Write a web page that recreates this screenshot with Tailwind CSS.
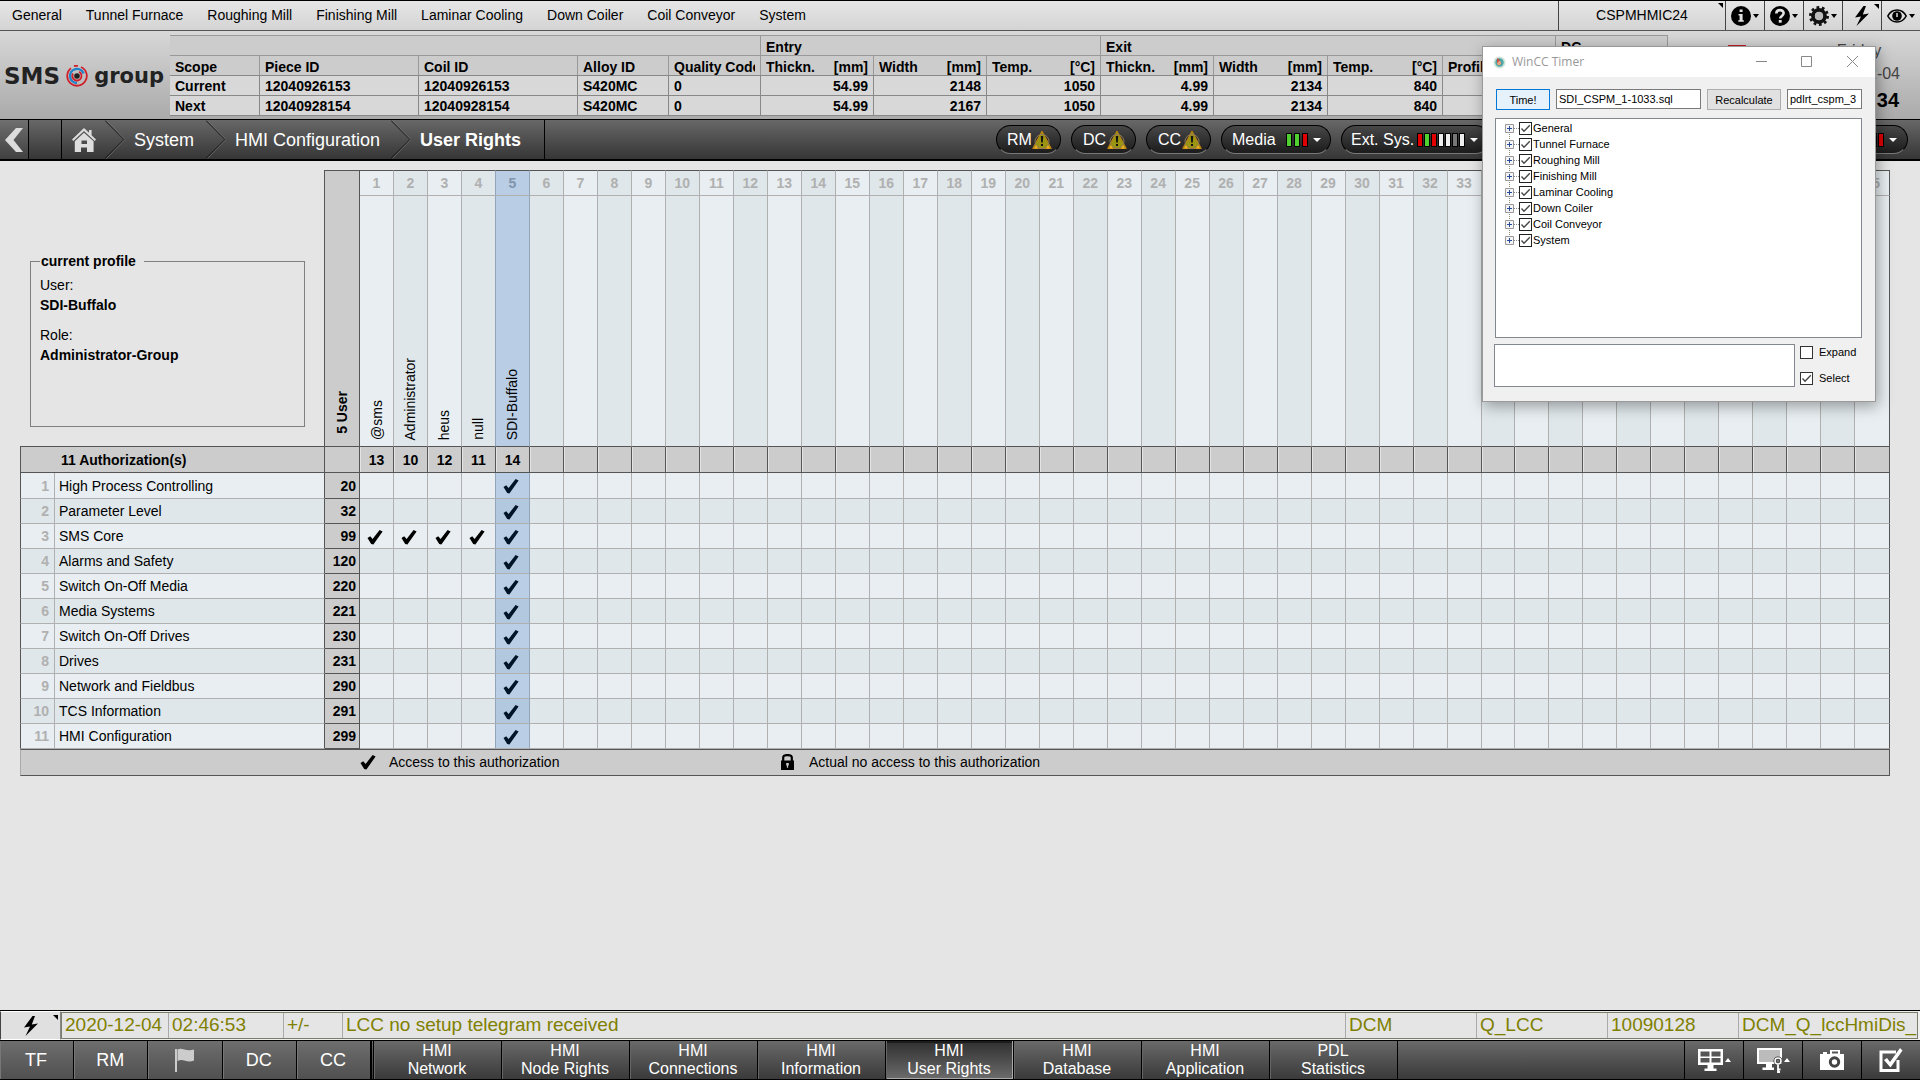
<!DOCTYPE html>
<html lang="en">
<head>
<meta charset="utf-8">
<title>HMI User Rights</title>
<script src="https://cdn.jsdelivr.net/npm/@tailwindcss/browser@4"></script>
</head>
<body class="relative flex h-screen flex-col overflow-hidden bg-[#e5e5e5] font-['Liberation_Sans',Arial,sans-serif] text-[14px] leading-[18px] text-black">

<svg class="hidden" aria-hidden="true">
  <symbol id="check" viewBox="0 0 16 16"><path d="M0.5 9 L3.2 7.2 L5.6 10 L12.6 1 L15.6 2.6 L6.4 15.4 L4.2 15 Z" fill="currentColor"/></symbol>
  <symbol id="bolt" viewBox="0 0 16 20"><path d="M9.5 0 L1 11.5 L7 10.6 L2.5 20 L15 7.6 L8.8 8.4 L12 0 Z" fill="currentColor"/></symbol>
  <symbol id="warn" viewBox="0 0 20 20"><path d="M10 1 L19.3 18.5 H0.7 Z" fill="#9a9412" stroke="#c08010" stroke-width="1"/><circle cx="10" cy="11.5" r="7" fill="none" stroke="#8b7a5a" stroke-width="1"/><path d="M2 18.4 H6 L4 15Z M18 18.4 H14 L16 15Z" fill="#f0b020"/><path d="M8.8 6 h2.4 l-.4 6.5 h-1.6z M9 14 h2 v2 h-2z" fill="#111"/></symbol>
  <symbol id="tick" viewBox="0 0 13 13"><path d="M2.5 6.5 L5 9.2 L10.8 3.2" fill="none" stroke="#444" stroke-width="1.3"/></symbol>
  <symbol id="chev" viewBox="0 0 20 38"><path d="M0 0 L19 19 L0 38" fill="none" stroke="#111" stroke-width="1"/><path d="M1.5 0 L20 19 L1.5 38" fill="none" stroke="#7a7a7a" stroke-width=".7"/></symbol>
</svg>

<!-- menu bar -->
<nav class="flex h-[31px] shrink-0 items-stretch justify-between border-t border-b border-t-black border-b-[#555] bg-linear-to-b from-[#e6e6e6] to-[#d4d4d4]">
  <div class="flex items-center gap-6 pb-[2px] pl-3">
    <a href="#">General</a><a href="#">Tunnel Furnace</a><a href="#">Roughing Mill</a><a href="#">Finishing Mill</a><a href="#">Laminar Cooling</a><a href="#">Down Coiler</a><a href="#">Coil Conveyor</a><a href="#">System</a>
  </div>
  <div class="flex">
    <button class="relative w-[167px] border-l border-[#444] pb-[2px]">CSPMHMIC24
      <svg class="absolute top-[2px] right-[2px] size-[5px]" viewBox="0 0 5 5"><path d="M0 0H5V5Z"/></svg></button>
    <button aria-label="Information" class="flex w-[39px] items-center justify-center gap-[2px] border-l border-[#444]">
      <svg class="size-5" viewBox="0 0 20 20"><circle cx="10" cy="10" r="10"/><path d="M8.6 3.5h3v2.6h-3zM7.5 8h4.1v6.2h1.2v1.6H7.3v-1.6h1.3V9.6H7.5z" fill="#e2e2e2"/></svg>
      <svg class="h-1 w-[6px]" viewBox="0 0 6 4"><path d="M0 0H6L3 4Z"/></svg></button>
    <button aria-label="Help" class="flex w-[39px] items-center justify-center gap-[2px] border-l border-[#444]">
      <svg class="size-5" viewBox="0 0 20 20"><circle cx="10" cy="10" r="10"/><path d="M6.3 7.5C6.3 3 13.6 3 13.6 7.3C13.6 9.8 10.2 10 10.2 12.5" fill="none" stroke="#e2e2e2" stroke-width="2.6"/><path d="M8.8 14h2.9v2.7H8.8z" fill="#e2e2e2"/></svg>
      <svg class="h-1 w-[6px]" viewBox="0 0 6 4"><path d="M0 0H6L3 4Z"/></svg></button>
    <button aria-label="Settings" class="flex w-[39px] items-center justify-center gap-[2px] border-l border-[#444]">
      <svg class="size-5" viewBox="0 0 20 20"><circle cx="10" cy="10" r="6" fill="none" stroke="#111" stroke-width="3.8"/><circle cx="10" cy="10" r="8.6" fill="none" stroke="#111" stroke-width="2.8" stroke-dasharray="2.7 2.7"/><circle cx="10" cy="10" r="4.2" fill="#bbb"/></svg>
      <svg class="h-1 w-[6px]" viewBox="0 0 6 4"><path d="M0 0H6L3 4Z"/></svg></button>
    <button aria-label="Alarms" class="relative flex w-[39px] items-center justify-center border-l border-[#444]">
      <svg class="h-5 w-4"><use href="#bolt"/></svg>
      <svg class="absolute top-[3px] right-[2px] size-[5px]" viewBox="0 0 5 5"><path d="M0 0H5V5Z"/></svg></button>
    <button aria-label="View" class="flex w-[39px] items-center justify-center gap-[2px] border-l border-[#444]">
      <svg class="h-[14px] w-5" viewBox="0 0 20 14"><path d="M0.8 7C5 -1 15 -1 19.2 7C15 15 5 15 0.8 7Z" fill="none" stroke="#000" stroke-width="1.6"/><circle cx="10" cy="7" r="4.8"/><path d="M10 4v4" stroke="#ddd" stroke-width="1.5"/></svg>
      <svg class="h-1 w-[6px]" viewBox="0 0 6 4"><path d="M0 0H6L3 4Z"/></svg></button>
  </div>
</nav>

<!-- material header -->
<header class="flex h-[88px] shrink-0 items-start bg-linear-to-b from-[#d8d8d8] to-[#aaaaaa] pt-1">
  <div class="flex w-[170px] shrink-0 items-center justify-between pt-[29px] pr-[6px] pl-[4px] font-['DejaVu_Sans',sans-serif] text-[21px] leading-6 font-bold text-[#222]">
    <span class="text-[23px]">SMS</span>
    <svg class="size-[22px]" viewBox="0 0 22 22" fill="none"><circle cx="11" cy="11" r="2.8" fill="#222"/><path d="M15 2A9.8 9.8 0 1 1 5 3.200" stroke="#d0202c" stroke-width="1.800"/><path d="M8 1A10.200 10.200 0 0 1 12 .9" stroke="#d0202c" stroke-width="1.800"/><path d="M11 18A7 7 0 1 1 17.600 8.500" stroke="#2080c8" stroke-width="2.400"/><path d="M7 8.500A4.600 4.600 0 1 0 13 6.800" stroke="#d0202c" stroke-width="1.800"/></svg>
    <span>group</span>
  </div>
  <table class="w-[1498px] shrink-0 table-fixed border-separate border-spacing-0 border-b border-[#888] text-left leading-[16px] font-bold whitespace-nowrap [&_td]:h-5 [&_td]:border-t [&_td]:border-l [&_td]:border-[#888] [&_td]:bg-[#d8d8d8] [&_td]:px-[5px] [&_td]:py-0 [&_th]:h-5 [&_th]:border-t [&_th]:border-l [&_th]:border-[#999] [&_th]:bg-[#cccccc] [&_th]:px-[5px] [&_th]:pt-[3px] [&_th]:pb-0">
    <colgroup><col class="w-[89px]"><col class="w-[159px]"><col class="w-[159px]"><col class="w-[91px]"><col class="w-[92px]"><col class="w-[113px]"><col class="w-[113px]"><col class="w-[114px]"><col class="w-[113px]"><col class="w-[114px]"><col class="w-[115px]"><col class="w-[113px]"><col class="w-[113px]"></colgroup>
    <thead id="matHead"></thead>
    <tbody id="matBody"></tbody>
  </table>
  <div class="flex flex-1 items-start justify-end gap-[72px] pt-[3px] pr-[20px] text-[16px] text-[#444]">
    <span class="mt-[7px] h-[14px] w-[18px] bg-[#c01c28]"></span>
    <div class="flex flex-col items-center">
      <span class="leading-[26px]">Friday</span>
      <span class="leading-5">2020-12-04</span>
      <span class="text-[20px] leading-8 font-bold text-black">02:46:34</span>
    </div>
  </div>
</header>

<!-- navigation bar -->
<div class="flex h-[42px] shrink-0 items-stretch border-t border-b-2 border-black bg-linear-to-b from-[#686868] to-[#363636] text-[18px] text-white">
  <button aria-label="Back" class="flex w-[29px] items-center justify-center border-r border-black bg-white/5">
    <svg class="h-[24px] w-[18px]" viewBox="0 0 18 24"><path d="M11 0H18L8.5 12L18 24H11L0 12Z" fill="#dcdcdc"/></svg></button>
  <div class="w-[33px] border-r border-black"></div>
  <a href="#" aria-label="Home" class="flex items-center pl-[10px]">
    <svg class="size-6" viewBox="0 0 24 24" fill="#ddd"><path d="M12 0L0 11.5L1.3 13L12 3L22.7 13L24 11.5L19.6 7.3V2H17V4.8Z"/><path d="M12 4.8L2.8 13.2V24H9V19.5H15V24H21.6V13.2ZM9.5 12.5H15V16H9.5Z" fill-rule="evenodd"/></svg></a>
  <svg class="ml-[9px] h-full w-5 shrink-0"><use href="#chev"/></svg>
  <a href="#" class="flex w-[81px] items-center pl-[9px]">System</a>
  <svg class="h-full w-5 shrink-0"><use href="#chev"/></svg>
  <a href="#" class="flex w-[165px] items-center pl-[9px] whitespace-nowrap">HMI Configuration</a>
  <svg class="h-full w-5 shrink-0"><use href="#chev"/></svg>
  <a href="#" class="flex w-[134px] items-center border-r border-black pl-[9px] font-bold">User Rights</a>
  <div class="flex flex-1 items-center gap-[10px] pl-[451px] text-[16px]">
    <button class="flex h-[29px] w-[65px] shrink-0 items-center rounded-full border border-black border-b-[#777] bg-linear-to-b from-[#484848] to-[#1c1c1c] pl-[10px]">RM<svg class="size-5"><use href="#warn"/></svg></button>
    <button class="flex h-[29px] w-[65px] shrink-0 items-center rounded-full border border-black border-b-[#777] bg-linear-to-b from-[#484848] to-[#1c1c1c] pl-[11px]">DC<svg class="ml-px size-5"><use href="#warn"/></svg></button>
    <button class="flex h-[29px] w-[65px] shrink-0 items-center rounded-full border border-black border-b-[#777] bg-linear-to-b from-[#484848] to-[#1c1c1c] pl-[11px]">CC<svg class="ml-px size-5"><use href="#warn"/></svg></button>
    <button class="flex h-[29px] w-[110px] shrink-0 items-center rounded-full border border-black border-b-[#777] bg-linear-to-b from-[#484848] to-[#1c1c1c] pl-[10px]">Media
      <span class="ml-[10px] flex gap-[2px]"><i class="h-[14px] w-[6px] border border-black bg-[#4fd030]"></i><i class="h-[14px] w-[6px] border border-black bg-[#4fd030]"></i><i class="h-[14px] w-[6px] border border-black bg-[#e00000]"></i></span>
      <svg class="ml-[5px] h-1 w-2" viewBox="0 0 8 4" fill="#fff"><path d="M0 0H8L4 4Z"/></svg></button>
    <button class="flex h-[29px] w-[149px] shrink-0 items-center rounded-full border border-black border-b-[#777] bg-linear-to-b from-[#484848] to-[#1c1c1c] pl-[9px] whitespace-nowrap">Ext. Sys.
      <span class="ml-[3px] flex gap-px"><i class="h-[14px] w-[6px] border border-black bg-[#e00000]"></i><i class="h-[14px] w-[6px] border border-black bg-[#4fd030]"></i><i class="h-[14px] w-[6px] border border-black bg-[#e00000]"></i><i class="h-[14px] w-[6px] border border-black bg-[#eee]"></i><i class="h-[14px] w-[6px] border border-black bg-[#eee]"></i><i class="h-[14px] w-[6px] border border-black bg-[#777]"></i><i class="h-[14px] w-[6px] border border-black bg-[#eee]"></i></span>
      <svg class="ml-[5px] h-1 w-2" viewBox="0 0 8 4" fill="#fff"><path d="M0 0H8L4 4Z"/></svg></button>
    <button aria-label="Status" class="mr-[12px] ml-auto flex h-[29px] w-[109px] shrink-0 items-center justify-end rounded-full border border-black border-b-[#777] bg-linear-to-b from-[#484848] to-[#1c1c1c] pr-[10px]">
      <span class="flex gap-px"><i class="h-[14px] w-[6px] border border-black bg-[#e00000]"></i><i class="h-[14px] w-[6px] border border-black bg-[#e00000]"></i></span>
      <svg class="ml-[5px] h-1 w-2" viewBox="0 0 8 4" fill="#fff"><path d="M0 0H8L4 4Z"/></svg></button>
  </div>
</div>

<!-- rights matrix -->
<main class="flex-1 pt-[9px] pr-[30px] pl-5">
  <table class="w-full table-fixed border-separate border-spacing-0">
    <colgroup id="cols"></colgroup>
    <thead id="head"></thead>
    <tbody id="rows"></tbody>
    <tfoot>
      <tr><td colspan="48" class="h-[27px] border-t border-r border-b border-l border-[#555] border-l-[#aaa] bg-[#cccccc] p-0 pb-[2px]">
        <div class="flex items-center pl-[339px]">
          <span class="flex w-[421px] items-center gap-[13px]"><svg class="size-4"><use href="#check"/></svg>Access to this authorization</span>
          <span class="flex items-center gap-[15px]"><svg class="h-4 w-[13px]" viewBox="0 0 13 16"><path d="M2.2 7V3.5C2.2 .2 10.8 .2 10.8 3.5V7" fill="none" stroke="#000" stroke-width="2.2"/><path d="M0 6.5H13V16H0Z"/><path d="M5.2 9h2.6v2.2l-.7.6v2H5.9v-2l-.7-.6z" fill="#ccc"/></svg>Actual no access to this authorization</span>
        </div></td></tr>
    </tfoot>
  </table>
</main>

<!-- alarm line -->
<div class="flex h-[31px] shrink-0 border-t border-b border-black bg-[#eee] text-[19px] text-[#808000]">
  <button aria-label="Acknowledge alarm" class="relative flex w-[61px] items-center justify-center border border-l-[#444] border-y-white border-r-[#888] bg-[#e0e0e0] text-black">
    <svg class="h-5 w-4"><use href="#bolt"/></svg>
    <svg class="absolute top-[3px] right-[2px] size-[5px]" viewBox="0 0 5 5"><path d="M0 0H5V5Z"/></svg></button>
  <div class="my-px mr-[2px] flex flex-1 overflow-hidden border border-[#7c7c68] bg-[#e5e5e5] leading-[23px] whitespace-nowrap">
    <span class="w-[107px] border-r border-[#aaa] pl-[3px]">2020-12-04</span>
    <span class="w-[115px] border-r border-[#aaa] pl-[3px]">02:46:53</span>
    <span class="w-[59px] border-r border-[#aaa] pl-[3px]">+/-</span>
    <span class="flex-1 border-r border-[#aaa] pl-[3px]">LCC no setup telegram received</span>
    <span class="w-[131px] border-r border-[#aaa] pl-[3px]">DCM</span>
    <span class="w-[131px] border-r border-[#aaa] pl-[3px]">Q_LCC</span>
    <span class="w-[131px] border-r border-[#aaa] pl-[3px]">10090128</span>
    <span class="w-[178px] overflow-hidden pl-[3px]">DCM_Q_lccHmiDis_</span>
  </div>
</div>

<!-- function bar -->
<div class="flex h-[39px] shrink-0 border-b border-black bg-linear-to-b from-[#6a6a6a] to-[#3a3a3a] text-[16px] leading-[18px] text-white">
  <div class="flex w-[374px] shrink-0 border-r-3 border-double border-black [&>button]:flex-1 [&>button]:border-r [&>button]:border-l [&>button]:border-r-black [&>button]:border-l-[#777] [&>button]:bg-linear-to-b [&>button]:from-[#6e6e6e] [&>button]:to-[#505050] [&>button]:pr-[2px] [&>button]:text-[18px]">
    <button>TF</button><button>RM</button>
    <button aria-label="Flag" class="flex items-center justify-center"><svg class="h-6 w-5" viewBox="0 0 20 24" fill="#ccc"><path d="M0 1h2v23H0z"/><path d="M2.5 1.5C7-1 11 4 19 1.5V12.5C12 15.5 8 10 2.5 13Z"/></svg></button>
    <button>DC</button><button>CC</button>
  </div>
  <div class="flex [&>button]:w-32 [&>button]:border-r [&>button]:border-l [&>button]:border-r-black [&>button]:border-l-[#666] [&>button]:pr-[2px]">
    <button>HMI<br>Network</button><button>HMI<br>Node Rights</button><button>HMI<br>Connections</button><button>HMI<br>Information</button>
    <button class="bg-linear-to-b from-[#303030] to-[#6c6c6c] shadow-[inset_-1px_-1px_0_#aaa,inset_0_2px_0_#1c1c1c]">HMI<br>User Rights</button>
    <button>HMI<br>Database</button><button>HMI<br>Application</button><button>PDL<br>Statistics</button>
  </div>
  <div class="ml-auto flex [&>button]:flex [&>button]:w-[59px] [&>button]:items-center [&>button]:justify-center [&>button]:border-l [&>button]:border-black">
    <button aria-label="Screens" class="gap-[2px]"><svg class="h-[22px] w-[25px]" viewBox="0 0 25 22"><path d="M0 0H25V16H0Z" fill="#fff"/><path d="M2.5 2.5h9v5h-9zM13.5 2.5h9v5h-9zM2.5 9h9v4.5h-9zM13.5 9h9v4.5h-9z" fill="#555"/><path d="M9.5 16h6v3.5h3V22h-12v-2.5h3z" fill="#fff"/></svg><svg class="h-1 w-[6px]" viewBox="0 0 6 4" fill="#fff"><path d="M0 4H6L3 0Z"/></svg></button>
    <button aria-label="Screen lock" class="gap-[2px]"><svg class="h-[25px] w-[25px]" viewBox="0 0 25 25"><path d="M0 0H25V16H0Z" fill="#fff"/><path d="M2 2H23V14H2Z" fill="#bbb"/><path d="M9 16h6v3.5h2V22H5.500v-2.500H9z" fill="#fff"/><circle cx="21" cy="13" r="3" fill="#777" stroke="#333" stroke-width="3"/><circle cx="21" cy="13" r="3" fill="none" stroke="#fff" stroke-width="1.500"/><path d="M21 16.500V25M21 21.500h2.500M21 24h2" stroke="#fff" stroke-width="1.800" fill="none"/></svg><svg class="h-1 w-[6px]" viewBox="0 0 6 4" fill="#fff"><path d="M0 4H6L3 0Z"/></svg></button>
    <button aria-label="Screenshot"><svg class="h-5 w-6" viewBox="0 0 24 20"><path d="M0 4H10V0H20V4H24V20H0Z" fill="#fff"/><path d="M12 1.500h6V3.500h-6z" fill="#555"/><path d="M3 2h4v2H3z" fill="#fff"/><circle cx="14.500" cy="12" r="4.200" fill="#fff" stroke="#444" stroke-width="3"/></svg></button>
    <button aria-label="Confirm"><svg class="h-6 w-6" viewBox="0 0 24 24"><path d="M17 4H2V22.500H19V12" fill="none" stroke="#fff" stroke-width="3"/><path d="M5 12L8 10L11 14L21 0L23.500 2.500L11.500 19.500Z" fill="#fff"/></svg></button>
  </div>
</div>

<!-- floating timer window -->
<section aria-label="WinCC Timer" class="absolute top-[46px] right-[44px] w-[394px] border border-[#999] bg-[#f0f0f0] pb-[14px] text-[11px] leading-[16px] shadow-[2px_4px_14px_rgba(0,0,0,0.35)]">
  <div class="flex h-[30px] items-center bg-white pl-[10px] text-[#999]">
    <svg class="size-[13px]" viewBox="0 0 13 13"><circle cx="6.500" cy="6.500" r="6" fill="#cfe5d8"/><circle cx="6.500" cy="6.500" r="4.200" fill="#4aa5a5"/><circle cx="6" cy="7" r="2.200" fill="#e8a080"/><path d="M4 2l3 2-3 3z" fill="#c84848"/></svg>
    <span class="ml-[6px] pb-px font-['Open_Sans',sans-serif] text-[12px]">WinCC Timer</span>
    <div class="ml-auto flex pr-[17px] pb-px">
      <button aria-label="Minimize" class="mr-[34px]"><svg class="size-[11px]" viewBox="0 0 11 11" stroke="#888" fill="none"><path d="M0 5.500H11"/></svg></button>
      <button aria-label="Maximize" class="mr-[35px]"><svg class="size-[11px]" viewBox="0 0 11 11" stroke="#888" fill="none"><path d="M.5.5H10.500V10.500H.5Z"/></svg></button>
      <button aria-label="Close"><svg class="size-[11px]" viewBox="0 0 11 11" stroke="#888" fill="none"><path d="M0 0L11 11M11 0L0 11"/></svg></button>
    </div>
  </div>
  <div class="flex items-start gap-[6px] pt-[12px] pr-[13px] pl-[13px]">
    <button class="h-[21px] w-[54px] border border-[#0078d7] bg-[#e5f1fb]">Time!</button>
    <input aria-label="SQL file" class="h-5 w-[145px] border border-[#7a7a7a] bg-white px-[2px]" value="SDI_CSPM_1-1033.sql">
    <button class="h-[21px] w-[74px] border border-[#adadad] bg-[#e1e1e1]">Recalculate</button>
    <input aria-label="Database" class="h-5 min-w-0 flex-1 border border-[#7a7a7a] bg-white px-[2px]" value="pdlrt_cspm_3">
  </div>
  <ul id="tree" class="mt-[8px] mr-[13px] ml-[12px] h-[220px] border border-[#828790] bg-white pt-px pl-[9px]"></ul>
  <div class="mt-[6px] flex pl-[11px]">
    <textarea aria-label="Log" class="h-[43px] w-[301px] resize-none border border-[#828790] bg-white"></textarea>
    <div class="flex flex-col gap-[10px] pl-[5px]">
      <label class="flex items-center gap-[6px]"><input type="checkbox" class="size-[13px] appearance-none border border-[#333] bg-white">Expand</label>
      <label class="flex items-center gap-[6px]"><span class="grid"><input type="checkbox" checked class="col-start-1 row-start-1 size-[13px] appearance-none border border-[#333] bg-white"><svg class="pointer-events-none col-start-1 row-start-1 size-[13px]"><use href="#tick"/></svg></span>Select</label>
    </div>
  </div>
</section>

<script>
// material header
document.getElementById('matHead').innerHTML =
  '<tr><th colspan="5" class="border-l-0!"></th><th colspan="3">Entry</th><th colspan="4">Exit</th><th class="border-r">DC</th></tr><tr>' +
  [['Scope',''],['Piece ID',''],['Coil ID',''],['Alloy ID',''],['Quality Code',''],['Thickn.','[mm]'],['Width','[mm]'],['Temp.','[°C]'],['Thickn.','[mm]'],['Width','[mm]'],['Temp.','[°C]'],['Profile',''],['','']]
    .map(([a, b], i) => `<th class="${i ? '' : 'border-l-0!'}"><div class="flex justify-between overflow-hidden"><span>${a}</span><span>${b}</span></div></th>`).join('') + '</tr>';
document.getElementById('matBody').innerHTML = [
  ['Current','12040926153','12040926153','S420MC','0','54.99','2148','1050','4.99','2134','840','',''],
  ['Next','12040928154','12040928154','S420MC','0','54.99','2167','1050','4.99','2134','840','','']
].map(r => '<tr>' + r.map((c, i) => `<td class="${i > 4 ? 'text-right' : i ? '' : 'border-l-0!'}">${c}</td>`).join('') + '</tr>').join('');

// rights matrix
const N = 45, users = ['@sms','Administrator','heus','null','SDI-Buffalo'], counts = [13,10,12,11,14];
const auths = [['High Process Controlling',20],['Parameter Level',32],['SMS Core',99],['Alarms and Safety',120],['Switch On-Off Media',220],['Media Systems',221],['Switch On-Off Drives',230],['Drives',231],['Network and Fieldbus',290],['TCS Information',291],['HMI Configuration',299]];
const idx = [...Array(N).keys()];
const edge = i => i === N - 1 ? 'border-r-[#555]' : i === 3 || i === 4 ? 'border-r-[#93a5bb]' : 'border-r-[#b0b0b0]';
const colBg = i => i === 4 ? 'bg-[#b9cde5]' : i % 2 ? 'bg-[#dfe7ea]' : 'bg-[#e8eef1]';
document.getElementById('cols').innerHTML = '<col class="w-[35px]"><col class="w-[270px]"><col class="w-[35px]">' + '<col>'.repeat(N);
document.getElementById('head').innerHTML =
  `<tr><td rowspan="2" colspan="2" class="border-r border-b border-[#555] pt-[82px] pr-[19px] pb-0 pl-[10px] align-top">
     <fieldset class="h-[175px] border border-[#808080] pl-[9px]">
       <legend class="pr-[8px] pl-px font-bold">current profile</legend>
       <p class="mt-[5px] leading-5">User:</p><p class="leading-5 font-bold">SDI-Buffalo</p>
       <p class="mt-[10px] leading-5">Role:</p><p class="leading-5 font-bold">Administrator-Group</p>
     </fieldset></td>
     <th rowspan="2" class="border-t border-r border-b border-[#555] bg-[#cccccc] p-0 pb-[12px] align-bottom"><span class="inline-block rotate-180 align-bottom [writing-mode:vertical-rl]">5 User</span></th>` +
  idx.map(i => `<th class="h-[26px] border-t border-r border-b border-t-[#555] border-b-[#b0b0b0] p-0 ${i === 4 ? 'text-[#8094ac]' : 'text-[#b0b0b0]'} ${edge(i)} ${colBg(i)}">${i + 1}</th>`).join('') + '</tr><tr>' +
  idx.map(i => `<th class="h-[251px] border-r border-b border-b-[#555] p-0 pb-[6px] align-bottom font-normal ${edge(i)} ${colBg(i)}"><span class="inline-block rotate-180 align-bottom [writing-mode:vertical-rl]">${users[i] || ''}</span></th>`).join('') + '</tr>' +
  `<tr><th colspan="2" class="h-[26px] border-r border-b border-l border-[#555] bg-[#cccccc] p-0 pl-[40px] text-left">11 Authorization(s)</th><th class="border-r border-b border-[#555] bg-[#cccccc]"></th>` +
  idx.map(i => `<th class="border-r border-b border-[#555] bg-[#cccccc] p-0 shadow-[inset_1px_0_0_#e4e4e4]">${counts[i] || ''}</th>`).join('') + '</tr>';
document.getElementById('rows').innerHTML = auths.map(([name, code], r) => {
  const bg = r % 2 ? 'bg-[#dfe7ea]' : 'bg-[#e8eef1]', sel = r % 2 ? 'bg-[#b1c8df]' : 'bg-[#bacee5]';
  return `<tr><td class="${r ? 'h-[25px]' : 'h-[26px]'} border-r border-b border-l border-[#b0b0b0] border-l-[#555] p-0 pr-[5px] text-right font-bold text-[#b0b0b0] ${bg}">${r + 1}</td>
    <th class="border-r border-b border-r-[#555] border-b-[#b0b0b0] p-0 pl-[4px] text-left font-normal ${bg}">${name}</th>
    <td class="border-r border-b border-[#555] bg-[#cccccc] p-0 pr-[3px] text-right font-bold">${code}</td>` +
    idx.map(i => `<td class="border-r border-b border-b-[#b0b0b0] p-0 ${edge(i)} ${i === 4 ? sel + ' text-[#001428]' : bg}">${i === 4 || (r === 2 && i < 4) ? '<svg class="mt-px ml-[7px] size-4"><use href="#check"/></svg>' : ''}</td>`).join('') + '</tr>';
}).join('');

// page tree of the timer window
const pages = ['General','Tunnel Furnace','Roughing Mill','Finishing Mill','Laminar Cooling','Down Coiler','Coil Conveyor','System'];
document.getElementById('tree').innerHTML = pages.map((p, i) =>
  `<li class="flex h-4 items-center"><svg class="h-4 w-[14px]" viewBox="0 0 14 16" fill="none"><path d="M4.500 ${i ? 0 : 8}V${i < 7 ? 16 : 8}M9 8.500H14" stroke="#888" stroke-dasharray="1 1"/><path d="M.5 4.500h8v8h-8z" fill="#f4f4f4" stroke="#999"/><path d="M2 8.500h5M4.500 6v5" stroke="#2a4a9a"/></svg>
   <label class="flex items-center gap-px"><span class="grid"><input type="checkbox" checked class="col-start-1 row-start-1 size-[13px] appearance-none border border-[#222] bg-white"><svg class="pointer-events-none col-start-1 row-start-1 size-[13px]"><use href="#tick"/></svg></span>${p}</label></li>`).join('');
</script>
</body>
</html>
